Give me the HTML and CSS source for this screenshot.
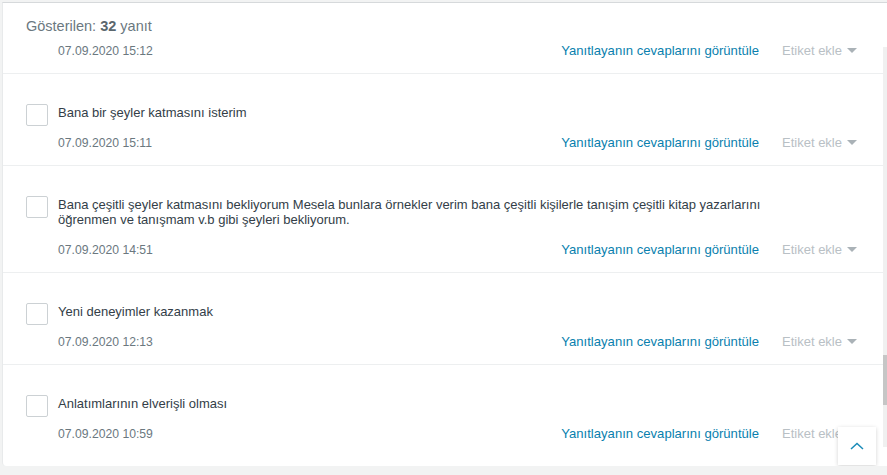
FILE: index.html
```html
<!DOCTYPE html>
<html lang="tr">
<head>
<meta charset="utf-8">
<title>Yanıtlar</title>
<link rel="stylesheet" href="styles.css">
</head>
<body>
<div class="card">
  <div class="card-header">Gösterilen: <b>32</b> yanıt</div>
  <div class="card-body">
    <div class="viewport">
      <ul class="list">
        <li class="row">
          <span class="checkbox"></span>
          <div class="content">
            <p class="answer">Daha fazla bilgi</p>
            <div class="meta">
              <span class="date">07.09.2020 15:12</span>
              <a class="link" href="#">Yanıtlayanın cevaplarını görüntüle</a>
              <span class="tag">Etiket ekle <span class="caret"></span></span>
            </div>
          </div>
        </li>
        <li class="row">
          <span class="checkbox"></span>
          <div class="content">
            <p class="answer">Bana bir şeyler katmasını isterim</p>
            <div class="meta">
              <span class="date">07.09.2020 15:11</span>
              <a class="link" href="#">Yanıtlayanın cevaplarını görüntüle</a>
              <span class="tag">Etiket ekle <span class="caret"></span></span>
            </div>
          </div>
        </li>
        <li class="row">
          <span class="checkbox"></span>
          <div class="content">
            <p class="answer">Bana çeşitli şeyler katmasını bekliyorum Mesela bunlara örnekler verim bana çeşitli kişilerle tanışim çeşitli kitap yazarlarını öğrenmen ve tanışmam v.b gibi şeyleri bekliyorum.</p>
            <div class="meta">
              <span class="date">07.09.2020 14:51</span>
              <a class="link" href="#">Yanıtlayanın cevaplarını görüntüle</a>
              <span class="tag">Etiket ekle <span class="caret"></span></span>
            </div>
          </div>
        </li>
        <li class="row">
          <span class="checkbox"></span>
          <div class="content">
            <p class="answer">Yeni deneyimler kazanmak</p>
            <div class="meta">
              <span class="date">07.09.2020 12:13</span>
              <a class="link" href="#">Yanıtlayanın cevaplarını görüntüle</a>
              <span class="tag">Etiket ekle <span class="caret"></span></span>
            </div>
          </div>
        </li>
        <li class="row">
          <span class="checkbox"></span>
          <div class="content">
            <p class="answer">Anlatımlarının elverişli olması</p>
            <div class="meta">
              <span class="date">07.09.2020 10:59</span>
              <a class="link" href="#">Yanıtlayanın cevaplarını görüntüle</a>
              <span class="tag">Etiket ekle <span class="caret"></span></span>
            </div>
          </div>
        </li>
      </ul>
    </div>
    <div class="track"><div class="thumb"></div></div>
  </div>
  <button class="to-top" type="button" aria-label="Yukarı">
    <svg width="14" height="8" viewBox="0 0 14 8"><path d="M1 7 L7 1.5 L13 7" fill="none" stroke="#1a8bb8" stroke-width="1.5"/></svg>
  </button>
</div>
</body>
</html>
```
FILE: styles.css
```css
* { box-sizing: border-box; }
html, body { margin: 0; padding: 0; }
body {
  background: #f2f3f3;
  font-family: "Liberation Sans", Arial, sans-serif;
  color: #333e48;
  overflow: hidden;
}
.card {
  position: relative;
  margin: 2px 0 0 2px;
  width: 885px;
  height: 464px;
  background: #fff;
  border-top: 1px solid #d6d9db;
  border-left: 1px solid #e8eaeb;
  border-bottom-left-radius: 4px;
}
.card-header {
  height: 42px;
  padding: 13px 0 0 23px;
  font-size: 14.5px;
  line-height: 20px;
  color: #6b787f;
}
.card-header b { font-weight: bold; color: #5b676e; }
.card-body {
  display: flex;
  height: 421px;
}
.viewport {
  flex: 1;
  overflow: hidden;
}
.list {
  list-style: none;
  margin: -63px 0 0 0;
  padding: 0;
}
.row {
  display: flex;
  gap: 10px;
  padding: 30px 26px 13px 23px;
  border-bottom: 1px solid #edeff0;
}
.row:last-child { border-bottom: none; }
.checkbox {
  flex: none;
  width: 22px;
  height: 22px;
  border: 1px solid #ccd1d4;
  border-radius: 2px;
  background: #fff;
}
.content { flex: 1; }
.answer {
  margin: 1px 0 0 0;
  max-width: 740px;
  font-size: 13px;
  line-height: 15px;
  color: #333e48;
}
.meta {
  display: flex;
  align-items: baseline;
  margin-top: 14px;
  line-height: 18px;
}
.date {
  font-size: 12.2px;
  color: #6b787f;
}
.link {
  margin-left: auto;
  font-size: 13.1px;
  color: #0a7fae;
  text-decoration: none;
}
.tag {
  margin-left: 23px;
  font-size: 13px;
  color: #b9c0c5;
  display: inline-flex;
  align-items: center;
}
.caret {
  margin-left: 5px;
  width: 0;
  height: 0;
  border-left: 5px solid transparent;
  border-right: 5px solid transparent;
  border-top: 5px solid #aab2b7;
  margin-top: -2px;
}
.track {
  flex: none;
  width: 4px;
  height: 400px;
  margin-top: 2px;
  background: #f0f0f0;
}
.thumb {
  margin-top: 308px;
  height: 50px;
  background: #c6c6c6;
}
.to-top {
  position: absolute;
  right: 11px;
  bottom: 1px;
  width: 38px;
  height: 38px;
  padding: 0;
  border: none;
  background: #fff;
  box-shadow: 0 1px 4px rgba(0, 0, 0, 0.18);
  display: flex;
  align-items: center;
  justify-content: center;
  cursor: pointer;
}
```
